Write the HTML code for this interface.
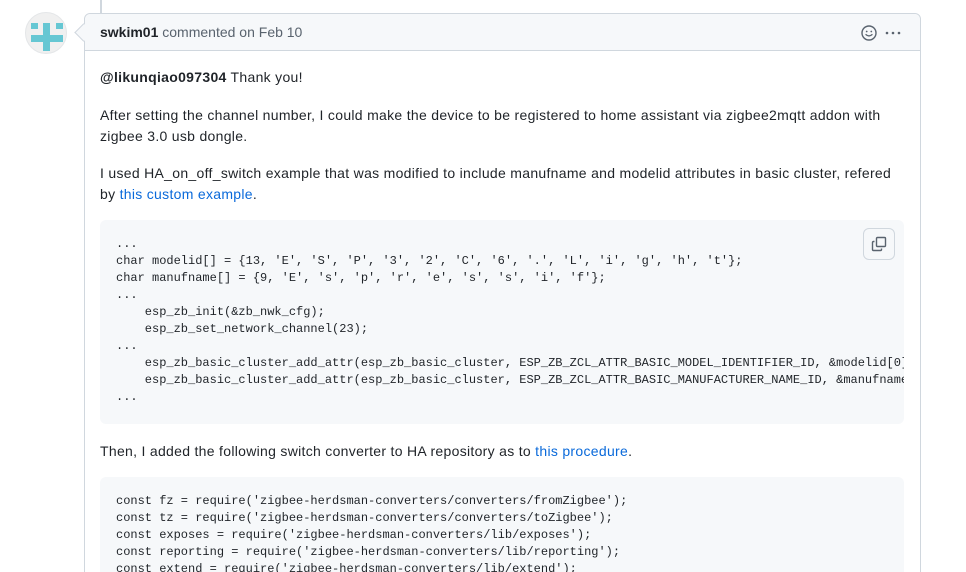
<!DOCTYPE html>
<html><head><meta charset="utf-8"><style>
*{margin:0;padding:0;box-sizing:border-box}
html,body{width:966px;height:572px;overflow:hidden}
body{background:#fff;font-family:"Liberation Sans",Arial,sans-serif;color:#1f2328;position:relative}
.vline{position:absolute;left:100px;top:0;width:2px;height:14px;background:#d0d7de}
.av{position:absolute;left:25px;top:12px;width:42px;height:42px;border-radius:50%;background:#f0f0f0;border:1px solid #e4e6e8;overflow:hidden}
.av i{position:absolute;background:#66c7d3}
.box{position:absolute;left:84px;top:13px;width:837px;height:570px;border:1px solid #d0d7de;border-radius:6px}
.arrow{position:absolute;left:77px;top:26px;width:13px;height:13px;background:#f6f8fa;border-left:1px solid #d0d7de;border-bottom:1px solid #d0d7de;transform:rotate(45deg);z-index:2}
.hdr{position:absolute;left:0;top:0;right:0;height:37px;background:#f6f8fa;border-bottom:1px solid #d0d7de;border-radius:6px 6px 0 0;font-size:14px;line-height:37px;padding-left:15px;color:#59636e}
.hdr b{color:#1f2328}
.t{position:absolute;left:100px;font-size:14px;line-height:21px;width:810px;white-space:nowrap;letter-spacing:0.3px}
a{color:#0969da;text-decoration:none}
pre{position:absolute;left:100px;width:804px;background:#f6f8fa;border-radius:6px;font-family:"Liberation Mono","DejaVu Sans Mono",monospace;font-size:12px;line-height:17px;padding:16px;color:#1f2328;overflow:hidden;white-space:pre}
.copy{position:absolute;left:863px;top:228px;width:32px;height:32px;border:1px solid #d0d7de;border-radius:6px;background:#f6f8fa}
</style></head><body>
<div class="vline"></div>
<div class="av"><i style="left:5px;top:10px;width:7px;height:6px"></i><i style="left:30px;top:10px;width:7px;height:6px"></i><i style="left:17px;top:10px;width:7px;height:28px"></i><i style="left:5px;top:22px;width:32px;height:7px"></i></div>
<div class="arrow"></div>
<div class="box"><div class="hdr"><b>swkim01</b> commented on Feb 10
<svg style="position:absolute;left:776px;top:11px" width="16" height="16" viewBox="0 0 16 16"><circle cx="8" cy="8" r="7" fill="none" stroke="#59636e" stroke-width="1.4"/><circle cx="5.7" cy="6.5" r="0.9" fill="#59636e"/><circle cx="10.3" cy="6.5" r="0.9" fill="#59636e"/><path d="M5 9.6q3 2.6 6 0" fill="none" stroke="#59636e" stroke-width="1.3" stroke-linecap="round"/></svg>
<svg style="position:absolute;left:799px;top:11px" width="18" height="16" viewBox="0 0 18 16"><circle cx="3" cy="8" r="1.3" fill="#59636e"/><circle cx="9" cy="8" r="1.3" fill="#59636e"/><circle cx="15" cy="8" r="1.3" fill="#59636e"/></svg>
</div></div>
<div class="t" style="top:67px"><b>@likunqiao097304</b> Thank you!</div>
<div class="t" style="top:105px">After setting the channel number, I could make the device to be registered to home assistant via zigbee2mqtt addon with<br>zigbee 3.0 usb dongle.</div>
<div class="t" style="top:163px">I used HA_on_off_switch example that was modified to include manufname and modelid attributes in basic cluster, refered<br>by <a>this custom example</a>.</div>
<pre style="top:220px;height:204px">...
char modelid[] = {13, 'E', 'S', 'P', '3', '2', 'C', '6', '.', 'L', 'i', 'g', 'h', 't'};
char manufname[] = {9, 'E', 's', 'p', 'r', 'e', 's', 's', 'i', 'f'};
...
    esp_zb_init(&amp;zb_nwk_cfg);
    esp_zb_set_network_channel(23);
...
    esp_zb_basic_cluster_add_attr(esp_zb_basic_cluster, ESP_ZB_ZCL_ATTR_BASIC_MODEL_IDENTIFIER_ID, &amp;modelid[0]);
    esp_zb_basic_cluster_add_attr(esp_zb_basic_cluster, ESP_ZB_ZCL_ATTR_BASIC_MANUFACTURER_NAME_ID, &amp;manufname[0]);
...</pre>
<div class="copy"><svg style="position:absolute;left:7px;top:7px" width="16" height="16" viewBox="0 0 16 16" fill="none" stroke="#59636e" stroke-width="1.4"><path d="M3.5 5.5h-1a1 1 0 0 0-1 1v7a1 1 0 0 0 1 1h7a1 1 0 0 0 1-1v-1"/><rect x="5.5" y="1.5" width="9" height="9" rx="1"/></svg></div>
<div class="t" style="top:441px">Then, I added the following switch converter to HA repository as to <a>this procedure</a>.</div>
<pre style="top:477px;height:120px">const fz = require('zigbee-herdsman-converters/converters/fromZigbee');
const tz = require('zigbee-herdsman-converters/converters/toZigbee');
const exposes = require('zigbee-herdsman-converters/lib/exposes');
const reporting = require('zigbee-herdsman-converters/lib/reporting');
const extend = require('zigbee-herdsman-converters/lib/extend');</pre>
</body></html>
